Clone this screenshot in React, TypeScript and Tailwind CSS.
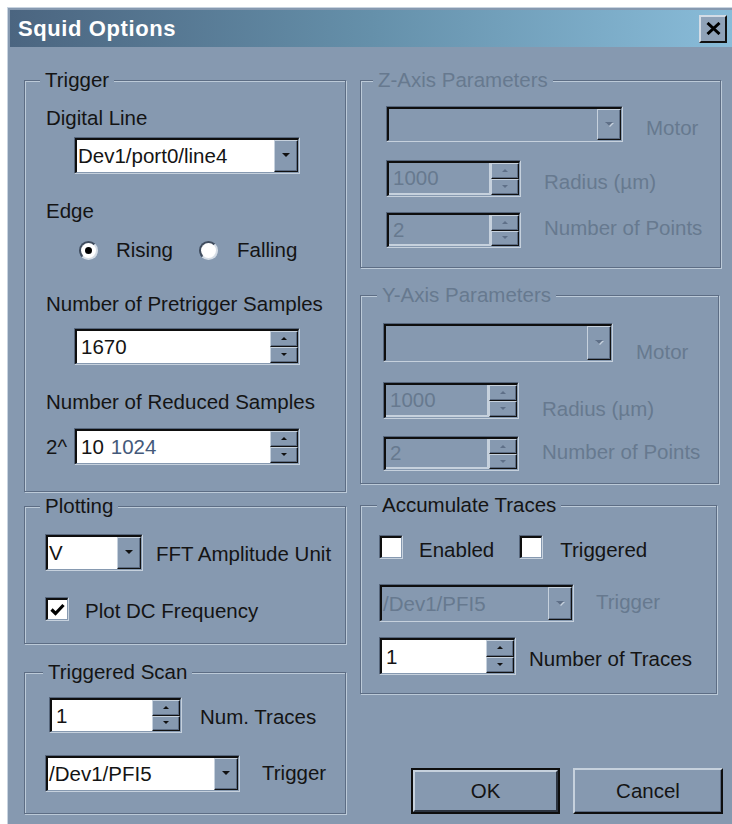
import React from "react";

const FACE = "bg-[#8699b0]";
const RAISED =
  "border border-t-[#c6d1dd] border-l-[#c6d1dd] border-r-[#111] border-b-[#111] shadow-[inset_-1px_-1px_0_#5b6b82] bg-[#8699b0]";

function DownTri({ dim }: { dim?: boolean }) {
  return (
    <svg width="10" height="6" viewBox="0 0 10 6" className="block">
      {dim && <polygon points="2,1 10,1 6,5" fill="#c6d1dd" />}
      <polygon points="1,0 9,0 5,4" fill={dim ? "#5f7088" : "#111"} />
    </svg>
  );
}

function SmallTri({ up, dim }: { up?: boolean; dim?: boolean }) {
  const fill = dim ? "#5f7088" : "#111";
  return (
    <svg width="8" height="4" viewBox="0 0 8 4" className="block">
      {up ? <polygon points="4,0 7,3 1,3" fill={fill} /> : <polygon points="1,0 7,0 4,3" fill={fill} />}
    </svg>
  );
}

function Sunken({ className = "", children }: { className?: string; children: React.ReactNode }) {
  return (
    <div
      className={`flex shrink-0 border border-t-[#56667c] border-l-[#56667c] border-r-[#c6d1dd] border-b-[#c6d1dd] ${className}`}
    >
      <div className="flex flex-1 min-w-0 border-t-2 border-l-2 border-r border-b border-t-[#0e0e0e] border-l-[#0e0e0e] border-r-[#8699b0] border-b-[#8699b0]">
        {children}
      </div>
    </div>
  );
}

function Combo({ className, value = "", disabled }: { className: string; value?: string; disabled?: boolean }) {
  return (
    <Sunken className={className}>
      <div
        className={`flex-1 min-w-0 flex items-center pl-[1px] whitespace-nowrap ${
          disabled ? "bg-[#8699b0] text-[#67798f]" : "bg-white text-[#141414]"
        }`}
      >
        {value}
      </div>
      <div className={`w-[24px] flex items-center justify-center ${RAISED}`}>
        <DownTri dim={disabled} />
      </div>
    </Sunken>
  );
}

function Spin({
  className,
  value,
  disabled,
  children,
}: {
  className: string;
  value: string;
  disabled?: boolean;
  children?: React.ReactNode;
}) {
  return (
    <Sunken className={className}>
      <div
        className={`flex-1 min-w-0 flex items-center pl-[4px] whitespace-nowrap ${
          disabled
            ? "bg-[#8699b0] text-[#67798f] border-r-2 border-b-2 border-r-[#c6d1dd] border-b-[#c6d1dd]"
            : "bg-white text-[#141414]"
        }`}
      >
        {value}
        {children}
      </div>
      <div className="w-[28px] flex flex-col">
        <div className={`flex-1 flex items-center justify-center ${RAISED}`}>
          <SmallTri up dim={disabled} />
        </div>
        <div className={`flex-1 flex items-center justify-center ${RAISED}`}>
          <SmallTri dim={disabled} />
        </div>
      </div>
    </Sunken>
  );
}

function Check({ checked }: { checked?: boolean }) {
  return (
    <div className="w-[24px] h-[24px] shrink-0 border border-t-[#56667c] border-l-[#56667c] border-r-[#c6d1dd] border-b-[#c6d1dd]">
      <div className="w-full h-full border-t-2 border-l-2 border-r border-b border-t-[#0e0e0e] border-l-[#0e0e0e] border-r-[#8699b0] border-b-[#8699b0] bg-white flex items-center justify-center">
        {checked && (
          <svg width="15" height="13" viewBox="0 0 15 13" className="block">
            <path d="M1.5 6.5 L5.5 10.5 L13.5 2" fill="none" stroke="#000" strokeWidth="3.2" />
          </svg>
        )}
      </div>
    </div>
  );
}

function Radio({ on }: { on?: boolean }) {
  return (
    <div className="w-[19px] h-[19px] shrink-0 rounded-full border-2 border-t-[#3f4c5e] border-l-[#3f4c5e] border-r-[#d5dde6] border-b-[#d5dde6] bg-white flex items-center justify-center">
      {on && <div className="w-[7px] h-[7px] rounded-full bg-black" />}
    </div>
  );
}

function Group({
  title,
  titleLeft,
  disabled,
  className,
  children,
}: {
  title: string;
  titleLeft: string;
  disabled?: boolean;
  className: string;
  children: React.ReactNode;
}) {
  return (
    <div
      className={`relative flex flex-col border border-[#5d6d84] shadow-[inset_1px_1px_0_#bccad8,1px_1px_0_#bccad8] ${className}`}
    >
      <span
        className={`absolute -top-[13px] ${titleLeft} px-[5px] leading-[24px] whitespace-nowrap ${FACE} ${
          disabled ? "text-[#67798f]" : "text-[#141414]"
        }`}
      >
        {title}
      </span>
      {children}
    </div>
  );
}

function TitleBar() {
  return (
    <div className="h-[37px] w-full shrink-0 flex items-center bg-linear-to-r from-[#4b6580] via-[#6590aa] to-[#89bcd9] pl-[8px] pr-[5px]">
      <span className="text-white font-bold text-[22px] tracking-[0.6px] leading-[24px]">Squid Options</span>
      <div className="ml-auto w-[28px] h-[28px] flex items-center justify-center border-2 border-t-[#d3dce6] border-l-[#d3dce6] border-r-[#111] border-b-[#111] bg-[#8fa2b8]">
        <svg width="15" height="13" viewBox="0 0 15 13" className="block">
          <path d="M1.5 1 L13.5 12 M13.5 1 L1.5 12" stroke="#000" strokeWidth="3" />
        </svg>
      </div>
    </div>
  );
}

export default function App() {
  const dim = "text-[#67798f]";
  return (
    <div className="w-[732px] h-[824px] bg-white overflow-hidden font-['Liberation_Sans',Arial,sans-serif] text-[20.5px] leading-[24px] text-[#141414]">
      <div className="ml-[7px] mt-[7px] w-[725px] h-[817px] bg-[#8699b0] border-l border-t border-[#c9d4e0] pl-[2px] pt-[2px] flex flex-col">
        <TitleBar />
        <div className="flex pl-[14px]">
          {/* left column */}
          <div className="w-[322px] pt-[33px] flex flex-col">
            <Group title="Trigger" titleLeft="left-[15px]" className="h-[412px] pt-[25px] pl-[21px]">
              <div>Digital Line</div>
              <Combo className="mt-[7px] ml-[28px] w-[226px] h-[37px]" value="Dev1/port0/line4" />
              <div className="mt-[25px]">Edge</div>
              <div className="mt-[15px] h-[24px] flex items-center pl-[33px]">
                <Radio on />
                <span className="ml-[18px]">Rising</span>
                <span className="ml-[26px]">
                  <Radio />
                </span>
                <span className="ml-[19px]">Falling</span>
              </div>
              <div className="mt-[30px]">Number of Pretrigger Samples</div>
              <Spin className="mt-[12px] ml-[28px] w-[226px] h-[37px]" value="1670" />
              <div className="mt-[25px]">Number of Reduced Samples</div>
              <div className="mt-[14px] flex items-center">
                <span className="w-[28px]">2^</span>
                <Spin className="w-[226px] h-[37px]" value="10">
                  <span className="ml-[7px] text-[#44597a]">1024</span>
                </Spin>
              </div>
            </Group>

            <Group title="Plotting" titleLeft="left-[15px]" className="mt-[14px] h-[138px] pt-[27px] pl-[20px]">
              <div className="flex items-start">
                <Combo className="w-[98px] h-[37px]" value="V" />
                <span className="ml-[13px] mt-[8px]">FFT Amplitude Unit</span>
              </div>
              <div className="mt-[26px] flex items-start">
                <Check checked />
                <span className="ml-[16px] mt-[2px]">Plot DC Frequency</span>
              </div>
            </Group>

            <Group title="Triggered Scan" titleLeft="left-[18px]" className="mt-[28px] h-[142px] pt-[24px] pl-[20px]">
              <div className="flex items-start">
                <Spin className="ml-[4px] w-[133px] h-[36px]" value="1" />
                <span className="ml-[18px] mt-[8px]">Num. Traces</span>
              </div>
              <div className="mt-[22px] flex items-start">
                <Combo className="w-[195px] h-[37px]" value="/Dev1/PFI5" />
                <span className="ml-[22px] mt-[6px]">Trigger</span>
              </div>
            </Group>
          </div>

          {/* right column */}
          <div className="ml-[14px] pt-[33px] flex flex-col">
            <Group
              title="Z-Axis Parameters"
              titleLeft="left-[12px]"
              disabled
              className="w-[361px] h-[188px] pt-[25px] pl-[25px]"
            >
              <div className="flex items-start">
                <Combo className="w-[237px] h-[36px]" disabled />
                <span className={`ml-[23px] mt-[10px] ${dim}`}>Motor</span>
              </div>
              <div className="mt-[18px] flex items-start">
                <Spin className="w-[135px] h-[37px]" value="1000" disabled />
                <span className={`ml-[23px] mt-[10px] ${dim}`}>Radius (µm)</span>
              </div>
              <div className="mt-[15px] flex items-start">
                <Spin className="w-[135px] h-[36px]" value="2" disabled />
                <span className={`ml-[23px] mt-[4px] ${dim}`}>Number of Points</span>
              </div>
            </Group>

            <Group
              title="Y-Axis Parameters"
              titleLeft="left-[16px]"
              disabled
              className="mt-[27px] w-[359px] h-[189px] pt-[27px] pl-[22px]"
            >
              <div className="flex items-start">
                <Combo className="w-[230px] h-[39px]" disabled />
                <span className={`ml-[23px] mt-[17px] ${dim}`}>Motor</span>
              </div>
              <div className="mt-[18px] flex items-start">
                <Spin className="w-[136px] h-[37px]" value="1000" disabled />
                <span className={`ml-[23px] mt-[15px] ${dim}`}>Radius (µm)</span>
              </div>
              <div className="mt-[15px] flex items-start">
                <Spin className="w-[136px] h-[35px]" value="2" disabled />
                <span className={`ml-[23px] mt-[4px] ${dim}`}>Number of Points</span>
              </div>
            </Group>

            <Group
              title="Accumulate Traces"
              titleLeft="left-[16px]"
              className="mt-[21px] w-[357px] h-[189px] pt-[29px] pl-[18px]"
            >
              <div className="flex items-start">
                <Check />
                <span className="ml-[16px] mt-[3px]">Enabled</span>
                <span className="ml-[25px]">
                  <Check />
                </span>
                <span className="ml-[17px] mt-[3px]">Triggered</span>
              </div>
              <div className="mt-[22px] flex items-start">
                <Combo className="w-[195px] h-[38px]" value="/Dev1/PFI5" disabled />
                <span className={`ml-[22px] mt-[6px] ${dim}`}>Trigger</span>
              </div>
              <div className="mt-[15px] flex items-start">
                <Spin className="w-[137px] h-[38px]" value="1" />
                <span className="ml-[13px] mt-[10px]">Number of Traces</span>
              </div>
            </Group>

            <div className="mt-[74px] ml-[51px] flex gap-[13px]">
              <div className="w-[149px] h-[46px] border-2 border-[#0e0e0e] flex">
                <div className="flex-1 flex items-center justify-center border-2 border-t-[#c6d1dd] border-l-[#c6d1dd] border-r-[#2c3440] border-b-[#2c3440]">
                  OK
                </div>
              </div>
              <div className="w-[150px] h-[46px] flex items-center justify-center border-2 border-t-[#c6d1dd] border-l-[#c6d1dd] border-r-[#0e0e0e] border-b-[#0e0e0e] shadow-[inset_-1px_-1px_0_#5b6b82]">
                Cancel
              </div>
            </div>
          </div>
        </div>
      </div>
    </div>
  );
}
